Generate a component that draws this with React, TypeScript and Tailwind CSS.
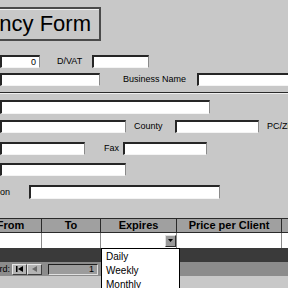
import React from "react";

const fieldCls =
  "bg-white border-t-2 border-l-2 border-t-[#262626] border-l-[#262626] border-b border-r border-b-[#f4f4f4] border-r-[#8a8a8a] shrink-0";

function Field({ className = "", children }: { className?: string; children?: React.ReactNode }) {
  return <div className={`${fieldCls} ${className}`}>{children}</div>;
}

export default function App() {
  return (
    <div
      className="relative w-[288px] h-[288px] overflow-hidden bg-[#c8c8c8] text-black"
      style={{ fontFamily: '"Liberation Sans", Arial, sans-serif' }}
    >
      <div className="flex flex-col">
        {/* Title */}
        <div className="mt-[7px] -ml-[70px] w-[171px] h-[34px] shrink-0 border-2 border-[#4a4a4a] shadow-[inset_1px_1px_0_#f0f0f0] flex items-center justify-end pr-[8px]">
          <span className="text-[22px] leading-none whitespace-nowrap">Agency Form</span>
        </div>

        {/* Row 1 */}
        <div className="mt-[14px] h-[13px] flex items-center">
          <Field className="w-[40px] h-[13px] flex items-center justify-end pr-[3px]">
            <span className="text-[9px] leading-none">0</span>
          </Field>
          <div className="ml-[17px] w-[35px] shrink-0 text-[9px] leading-none whitespace-nowrap">D/VAT</div>
          <Field className="w-[57px] h-[13px]" />
        </div>

        {/* Row 2 */}
        <div className="mt-[5px] h-[13px] flex items-center">
          <Field className="w-[100px] h-[13px]" />
          <div className="ml-[23px] w-[74px] shrink-0 text-[9px] leading-none whitespace-nowrap">Business Name</div>
          <Field className="w-[95px] h-[13px]" />
        </div>

        {/* separator */}
        <div className="mt-[6px] h-[1px] bg-[#2a2a2a]" />
        <div className="h-[1px] bg-[#efefef]" />

        {/* Row 3 */}
        <div className="mt-[6px] h-[14px] flex items-center">
          <Field className="w-[210px] h-[14px]" />
        </div>

        {/* Row 4 */}
        <div className="mt-[6px] h-[13px] flex items-center">
          <Field className="w-[126px] h-[13px]" />
          <div className="ml-[8px] w-[41px] shrink-0 text-[9px] leading-none whitespace-nowrap">County</div>
          <Field className="w-[84px] h-[13px]" />
          <div className="ml-[8px] shrink-0 text-[9px] leading-none whitespace-nowrap">PC/Zip</div>
        </div>

        {/* Row 5 */}
        <div className="mt-[9px] h-[13px] flex items-center">
          <Field className="w-[85px] h-[13px]" />
          <div className="ml-[19px] w-[19px] shrink-0 text-[9px] leading-none whitespace-nowrap">Fax</div>
          <Field className="w-[84px] h-[13px]" />
        </div>

        {/* Row 6 */}
        <div className="mt-[8px] h-[13px] flex items-center">
          <Field className="w-[126px] h-[13px]" />
        </div>

        {/* Row 7 */}
        <div className="mt-[9px] h-[14px] flex items-center">
          <div className="-ml-[60px] w-[70px] shrink-0 text-right text-[9px] leading-none whitespace-nowrap">Description</div>
          <Field className="ml-[19px] w-[191px] h-[14px]" />
        </div>

        {/* Grid header */}
        <div className="mt-[19px] h-[15px] flex bg-[#a0a0a0] border-t border-b border-[#2a2a2a] text-[11px] font-bold leading-none">
          <div className="-ml-[20px] w-[62px] shrink-0 border-r border-[#2a2a2a] flex items-center justify-center">From</div>
          <div className="w-[59px] shrink-0 border-r border-[#2a2a2a] flex items-center justify-center">To</div>
          <div className="w-[76px] shrink-0 border-r border-[#2a2a2a] flex items-center justify-center">Expires</div>
          <div className="w-[105px] shrink-0 border-r border-[#2a2a2a] flex items-center justify-center">Price per Client</div>
          <div className="flex-1" />
        </div>

        {/* Data row */}
        <div className="h-[15px] flex bg-white">
          <div className="-ml-[20px] w-[62px] shrink-0 border-r border-[#8a8a8a]" />
          <div className="w-[59px] shrink-0 border-r border-[#8a8a8a]" />
          <div className="w-[76px] shrink-0 border-r border-[#8a8a8a] flex items-center justify-end">
            <div className="w-[11px] h-[12px] bg-[#9a9a9a] border-t border-l border-t-[#e0e0e0] border-l-[#e0e0e0] border-b border-r border-b-[#303030] border-r-[#303030] flex items-center justify-center">
              <svg width="5" height="3" viewBox="0 0 5 3"><path d="M0 0h5L2.5 3z" fill="#000" /></svg>
            </div>
          </div>
          <div className="w-[105px] shrink-0 border-r border-[#8a8a8a]" />
          <div className="flex-1" />
        </div>

        {/* dark band */}
        <div className="h-[14px] bg-[#3a3a3a]" />

        {/* Nav bar */}
        <div className="h-[14px] bg-[#8c8c8c] flex items-center">
          <div className="-ml-[30px] w-[40px] shrink-0 text-right text-[9px] leading-none whitespace-nowrap">Record:</div>
          <div className="ml-[2px] w-[15px] h-[11px] shrink-0 bg-[#b4b4b4] border border-[#e8e8e8] border-r-[#404040] border-b-[#404040] flex items-center justify-center">
            <svg width="7" height="6" viewBox="0 0 7 6"><rect x="0" y="0" width="1.5" height="6" fill="#000" /><path d="M7 0v6L2 3z" fill="#000" /></svg>
          </div>
          <div className="w-[15px] h-[11px] shrink-0 bg-[#b4b4b4] border border-[#e8e8e8] border-r-[#404040] border-b-[#404040] flex items-center justify-center">
            <svg width="5" height="6" viewBox="0 0 5 6"><path d="M5 0v6L0 3z" fill="#6a6a6a" /></svg>
          </div>
          <div className="ml-[6px] w-[50px] h-[11px] shrink-0 bg-[#9c9c9c] border-t border-l border-t-[#202020] border-l-[#202020] border-b border-r border-b-[#e0e0e0] border-r-[#e0e0e0] flex items-center justify-end pr-[3px]">
            <span className="text-[9px] leading-none">1</span>
          </div>
        </div>
      </div>

      {/* Dropdown list */}
      <div className="absolute left-[101px] top-[248px] w-[79px] h-[44px] bg-white border border-black pl-[4px] pt-[1px] text-[10px] leading-[14px]">
        <div>Daily</div>
        <div>Weekly</div>
        <div>Monthly</div>
      </div>
    </div>
  );
}
